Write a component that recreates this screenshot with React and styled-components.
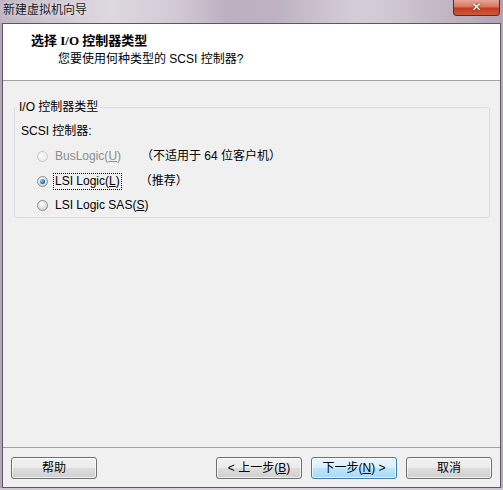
import React from "react";
import styled, { createGlobalStyle } from "styled-components";

const Global = createGlobalStyle`
  html, body { margin: 0; padding: 0; background: #c9c0cc; }
  body { font-family: "Liberation Sans", "Noto Sans CJK SC", sans-serif; }
`;

const CJK = `"Liberation Sans", "Noto Sans CJK SC", sans-serif`;

const Window = styled.div`
  width: 503px;
  height: 490px;
  display: flex;
  flex-direction: column;
  box-sizing: border-box;
  background: linear-gradient(90deg, #b3a6b6 0%, #cbc2ce 20%, #d3cad6 35%, #bdb1c1 55%, #c8bfcb 75%, #b7abba 100%);
  overflow: hidden;
`;

const TitleBar = styled.div`
  height: 23px;
  flex: none;
  display: flex;
  justify-content: space-between;
  align-items: flex-start;
  padding-left: 3px;
  background: linear-gradient(90deg, rgba(255,255,255,0.15) 0%, rgba(255,255,255,0.35) 22%, rgba(120,100,130,0.15) 45%, rgba(255,255,255,0.25) 70%, rgba(120,100,130,0.1) 100%);
`;

const Title = styled.div`
  font-family: ${CJK};
  font-size: 12px;
  line-height: 20px;
  color: #1a1a1a;
  text-shadow: 0 0 6px rgba(255,255,255,0.9);
`;

const CloseButton = styled.div`
  width: 45px;
  height: 15px;
  margin-right: 3px;
  border: 1px solid #5a2a28;
  border-top: none;
  border-radius: 0 0 4px 4px;
  background: linear-gradient(180deg, #e7a596 0%, #d9745f 45%, #c23a22 55%, #d05a3a 100%);
  display: flex;
  align-items: center;
  justify-content: center;
  color: #fff;
  font-family: "DejaVu Sans", sans-serif;
  font-weight: bold;
  font-size: 12px;
  line-height: 15px;
  text-shadow: 0 0 2px #5a1a10;
`;

const Client = styled.div`
  flex: none;
  height: 465px;
  margin: 0 2px;
  box-sizing: border-box;
  border: 1px solid #5e5664;
  background: #f0f0f0;
  display: flex;
  flex-direction: column;
`;

const Header = styled.div`
  height: 57px;
  flex: none;
  box-sizing: border-box;
  background: #ffffff;
  border-bottom: 1px solid #a0a0a0;
  padding: 9px 0 0 28px;
`;

const HeaderTitle = styled.div`
  font-family: "Liberation Serif", "Noto Sans CJK SC", serif;
  font-weight: bold;
  font-size: 13px;
  line-height: 16px;
  color: #000;
`;

const HeaderSub = styled.div`
  font-family: ${CJK};
  font-size: 12px;
  line-height: 16px;
  color: #000;
  margin-top: 2px;
  padding-left: 27px;
`;

const Body = styled.div`
  flex: 1;
  padding: 18px 10px 0 11px;
`;

const GroupBox = styled.fieldset`
  margin: 0;
  padding: 8px 0 3px 6px;
  border: 1px solid #d5dfe5;
  border-radius: 3px;
  min-width: 0;
`;

const Legend = styled.legend`
  font-family: ${CJK};
  font-size: 12px;
  line-height: 16px;
  color: #000;
  margin-left: -4px;
  padding: 0 2px;
`;

const Label = styled.div`
  font-family: ${CJK};
  font-size: 12px;
  line-height: 16px;
  color: #000;
`;

const Options = styled.div`
  display: flex;
  flex-direction: column;
  gap: 7.5px;
  margin-top: 9px;
  padding-left: 16px;
`;

const OptionRow = styled.div`
  display: flex;
  align-items: center;
  height: 17px;
`;

const Radio = styled.span`
  width: 11px;
  height: 11px;
  box-sizing: border-box;
  border-radius: 50%;
  border: 1px solid ${(p) => (p.$disabled ? "#c8c8c8" : "#8c8c8c")};
  background: ${(p) =>
    p.$disabled
      ? "radial-gradient(circle at 40% 35%, #fafafa, #e6e6e6)"
      : "radial-gradient(circle at 40% 35%, #ffffff, #d8d8d8 70%, #c4c4c4)"};
  display: flex;
  align-items: center;
  justify-content: center;
  flex: none;
  &::after {
    content: "";
    display: ${(p) => (p.$checked ? "block" : "none")};
    width: 5px;
    height: 5px;
    border-radius: 50%;
    background: radial-gradient(circle at 35% 35%, #8fd2f7, #1b6fb0 60%, #1a4f86);
  }
`;

const OptionText = styled.span`
  font-family: ${CJK};
  font-size: 12px;
  line-height: 15px;
  color: ${(p) => (p.$disabled ? "#8d8d8d" : "#000")};
  margin-left: 5px;
  width: ${(p) => (p.$fixed ? "84px" : "auto")};
  padding: 0 1px;
  border: 1px dotted ${(p) => (p.$focused ? "#000" : "transparent")};
  flex: none;
`;

const OptionNote = styled.span`
  font-family: ${CJK};
  font-size: 12px;
  line-height: 15px;
  color: #000;
  margin-left: ${(p) => p.$offset}px;
`;

const Footer = styled.div`
  height: 40px;
  flex: none;
  box-sizing: border-box;
  border-top: 1px solid #a0a0a0;
  padding: 9px 8px 0 8px;
  display: flex;
  justify-content: space-between;
  align-items: flex-start;
`;

const ButtonGroup = styled.div`
  display: flex;
  gap: 9px;
`;

const Button = styled.button`
  width: 86px;
  height: 22px;
  box-sizing: border-box;
  border-radius: 3px;
  border: 1px solid ${(p) => (p.$default ? "#3c7fb1" : "#707070")};
  background: ${(p) =>
    p.$default
      ? "linear-gradient(180deg, #eaf6fd 0%, #d9f0fc 48%, #bee6fd 52%, #a7d9f5 100%)"
      : "linear-gradient(180deg, #f2f2f2 0%, #ebebeb 48%, #dddddd 52%, #cfcfcf 100%)"};
  box-shadow: inset 0 0 0 1px rgba(255,255,255,0.7);
  font-family: ${CJK};
  font-size: 12px;
  line-height: 16px;
  color: #000;
  padding: 0;
  display: flex;
  align-items: center;
  justify-content: center;
`;

const BottomFrame = styled.div`
  flex: 1;
  background: linear-gradient(90deg, #cfc6d2, #ddd5df, #cfc6d2);
`;

export default function App() {
  return (
    <>
      <Global />
      <Window>
        <TitleBar>
          <Title>新建虚拟机向导</Title>
          <CloseButton>✕</CloseButton>
        </TitleBar>
        <Client>
          <Header>
            <HeaderTitle>选择 I/O 控制器类型</HeaderTitle>
            <HeaderSub>您要使用何种类型的 SCSI 控制器?</HeaderSub>
          </Header>
          <Body>
            <GroupBox>
              <Legend>I/O 控制器类型</Legend>
              <Label>SCSI 控制器:</Label>
              <Options>
                <OptionRow>
                  <Radio $disabled />
                  <OptionText $disabled $fixed>
                    BusLogic(<u>U</u>)
                  </OptionText>
                  <OptionNote $offset={0}>（不适用于 64 位客户机）</OptionNote>
                </OptionRow>
                <OptionRow>
                  <Radio $checked />
                  <OptionText $focused>
                    LSI Logic(<u>L</u>)
                  </OptionText>
                  <OptionNote $offset={18}>（推荐）</OptionNote>
                </OptionRow>
                <OptionRow>
                  <Radio />
                  <OptionText>
                    LSI Logic SAS(<u>S</u>)
                  </OptionText>
                </OptionRow>
              </Options>
            </GroupBox>
          </Body>
          <Footer>
            <Button>帮助</Button>
            <ButtonGroup>
              <Button>
                &lt; 上一步(<u>B</u>)
              </Button>
              <Button $default>
                下一步(<u>N</u>) &gt;
              </Button>
              <Button>取消</Button>
            </ButtonGroup>
          </Footer>
        </Client>
        <BottomFrame />
      </Window>
    </>
  );
}
